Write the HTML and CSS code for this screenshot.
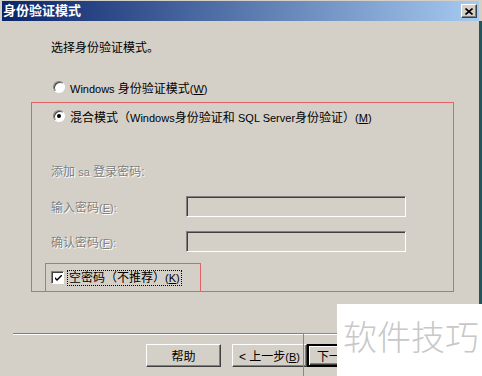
FILE: index.html
```html
<!DOCTYPE html>
<html lang="zh-CN">
<head>
    <meta charset="UTF-8">
    <title>身份验证模式</title>
    <link rel="stylesheet" href="styles.css">
</head>
<body>
    <div class="window">
        <div class="titlebar">
            <span class="title">身份验证模式</span>
            <span class="close">
                <svg width="8" height="7" viewBox="0 0 8 7"><path d="M0.5 0.5 L7.5 6.5 M7.5 0.5 L0.5 6.5" stroke="#000" stroke-width="1.6"/></svg>
            </span>
        </div>

        <div class="main">
            <div class="content">
                <p class="intro">选择身份验证模式。</p>

                <div class="option plain">
                    <span class="radio"></span>
                    <span><span class="latin">Windows </span>身份验证模式<span class="latin">(<u>W</u>)</span></span>
                </div>

                <div class="mark mixed">
                    <div class="option">
                        <span class="radio checked"></span>
                        <span>混合模式（<span class="latin">Windows</span>身份验证和 <span class="latin">SQL Server</span>身份验证）<span class="latin">(<u>M</u>)</span></span>
                    </div>

                    <p class="disabled hint">添加 <span class="latin">sa</span> 登录密码:</p>

                    <div class="field">
                        <span class="disabled field-label">输入密码<span class="latin">(<u>E</u>):</span></span>
                        <span class="input"></span>
                    </div>
                    <div class="field">
                        <span class="disabled field-label">确认密码<span class="latin">(<u>F</u>):</span></span>
                        <span class="input"></span>
                    </div>

                    <div class="mark blank">
                        <span class="checkbox">
                            <svg width="7" height="7" viewBox="0 0 7 7"><path d="M0 2 L0 4 L2 6 L7 1 L7 -1 L2 4 Z" fill="#000"/></svg>
                        </span>
                        <span class="focus">空密码（不推荐）<span class="latin">(<u>K</u>)</span></span>
                    </div>
                </div>
            </div>

            <div class="footer">
                <div class="separator"></div>
                <div class="buttons">
                    <button class="btn">帮助</button>
                    <button class="btn back">&lt; 上一步<span class="latin">(<u>B</u>)</span></button>
                    <button class="btn default">下一步</button>
                </div>
            </div>
        </div>

        <div class="mark next-mark"></div>
        <div class="watermark">软件技巧</div>
    </div>
</body>
</html>
```

FILE: styles.css
```css
body {
    margin: 0;
    background: #fff;
    font-family: "Liberation Sans", "Noto Sans CJK SC", sans-serif;
    font-size: 12px;
    color: #000;
}
.latin {
    font-size: 11px;
}
.window {
    position: relative;
    width: 482px;
    height: 376px;
    background: #d4d0c8;
    overflow: hidden;
}
.titlebar {
    margin: 1px 3px 0 2px;
    height: 20px;
    padding: 0 2px 0 1px;
    background: linear-gradient(to right, #0a246a, #a6caf0);
    display: flex;
    align-items: center;
    justify-content: space-between;
}
.title {
    color: #fff;
    font-weight: bold;
    font-size: 13px;
    line-height: 20px;
}
.close {
    width: 16px;
    height: 14px;
    box-sizing: border-box;
    background: #d4d0c8;
    border: 1px solid;
    border-color: #fff #404040 #404040 #fff;
    box-shadow: inset -1px -1px #808080;
    display: flex;
    align-items: center;
    justify-content: center;
}
.close svg {
    display: block;
}
.main {
    height: 355px;
    border-right: 3px solid #25555c;
}
.content {
    padding: 19px 0 0 31px;
}
.intro {
    margin: 0;
    padding-left: 20px;
    line-height: 16px;
}
.option {
    display: flex;
    align-items: center;
    height: 16px;
    padding-left: 21px;
}
.option.plain {
    margin-top: 23px;
    padding-left: 22px;
}
.radio {
    width: 12px;
    height: 12px;
    box-sizing: border-box;
    border-radius: 50%;
    background: #fff;
    border: 1px solid;
    border-color: #808080 #fff #fff #808080;
    box-shadow: inset 1px 1px #404040;
    margin-right: 5px;
    display: flex;
    align-items: center;
    justify-content: center;
}
.radio.checked::after {
    content: "";
    width: 4px;
    height: 4px;
    border-radius: 50%;
    background: #000;
}
.mark {
    border: 1px solid #e06464;
}
.mixed {
    margin-top: 7px;
    width: 423px;
    box-sizing: border-box;
    padding-top: 5px;
}
.disabled {
    color: #808080;
    text-shadow: 1px 1px #fff;
}
.hint {
    margin: 40px 0 0;
    padding-left: 19px;
    line-height: 16px;
}
.field {
    display: flex;
    align-items: center;
    height: 21px;
    margin-top: 16px;
    padding-left: 19px;
}
.field + .field {
    margin-top: 14px;
}
.field-label {
    width: 135px;
}
.input {
    width: 220px;
    height: 21px;
    box-sizing: border-box;
    border: 1px solid;
    border-color: #808080 #fff #fff #808080;
    box-shadow: inset 1px 1px #404040;
}
.blank {
    margin: 11px 0 0 13px;
    width: 156px;
    height: 28px;
    box-sizing: border-box;
    border-bottom: none;
    padding-left: 5px;
    display: flex;
    align-items: center;
}
.checkbox {
    width: 13px;
    height: 13px;
    box-sizing: border-box;
    background: #fff;
    border: 1px solid;
    border-color: #808080 #fff #fff #808080;
    box-shadow: inset 1px 1px #404040;
    margin-right: 4px;
    display: flex;
    align-items: center;
    justify-content: center;
}
.checkbox svg {
    display: block;
    margin: 1px 0 0 1px;
}
.focus {
    outline: 1px dotted #000;
    padding: 0 1px;
    line-height: 14px;
}
.footer {
    margin-top: 41px;
}
.separator {
    margin-left: 13px;
    border-top: 1px solid #808080;
    border-bottom: 1px solid #fff;
}
.buttons {
    display: flex;
    margin-top: 9px;
    padding-left: 146px;
}
.btn {
    width: 75px;
    height: 23px;
    box-sizing: border-box;
    padding: 0;
    font-family: inherit;
    font-size: 12px;
    color: #000;
    background: #d4d0c8;
    border: 1px solid;
    border-color: #fff #404040 #404040 #fff;
    box-shadow: inset -1px -1px #808080;
}
.back {
    margin-left: 11px;
}
.default {
    text-align: left;
    padding-left: 8px;
    border-width: 2px;
    border-color: #000;
    box-shadow: inset 1px 1px #fff, inset -1px -1px #404040, inset -2px -2px #808080;
}
.next-mark {
    position: absolute;
    left: 303px;
    top: 333px;
    width: 60px;
    height: 60px;
}
.watermark {
    position: absolute;
    left: 337px;
    top: 304px;
    width: 145px;
    height: 72px;
    box-sizing: border-box;
    padding: 14px 0 0 6px;
    background: #fff;
    color: #c8c8c8;
    font-family: "Noto Sans CJK SC", sans-serif;
    font-weight: 300;
    font-size: 34px;
    line-height: 36px;
}
```
